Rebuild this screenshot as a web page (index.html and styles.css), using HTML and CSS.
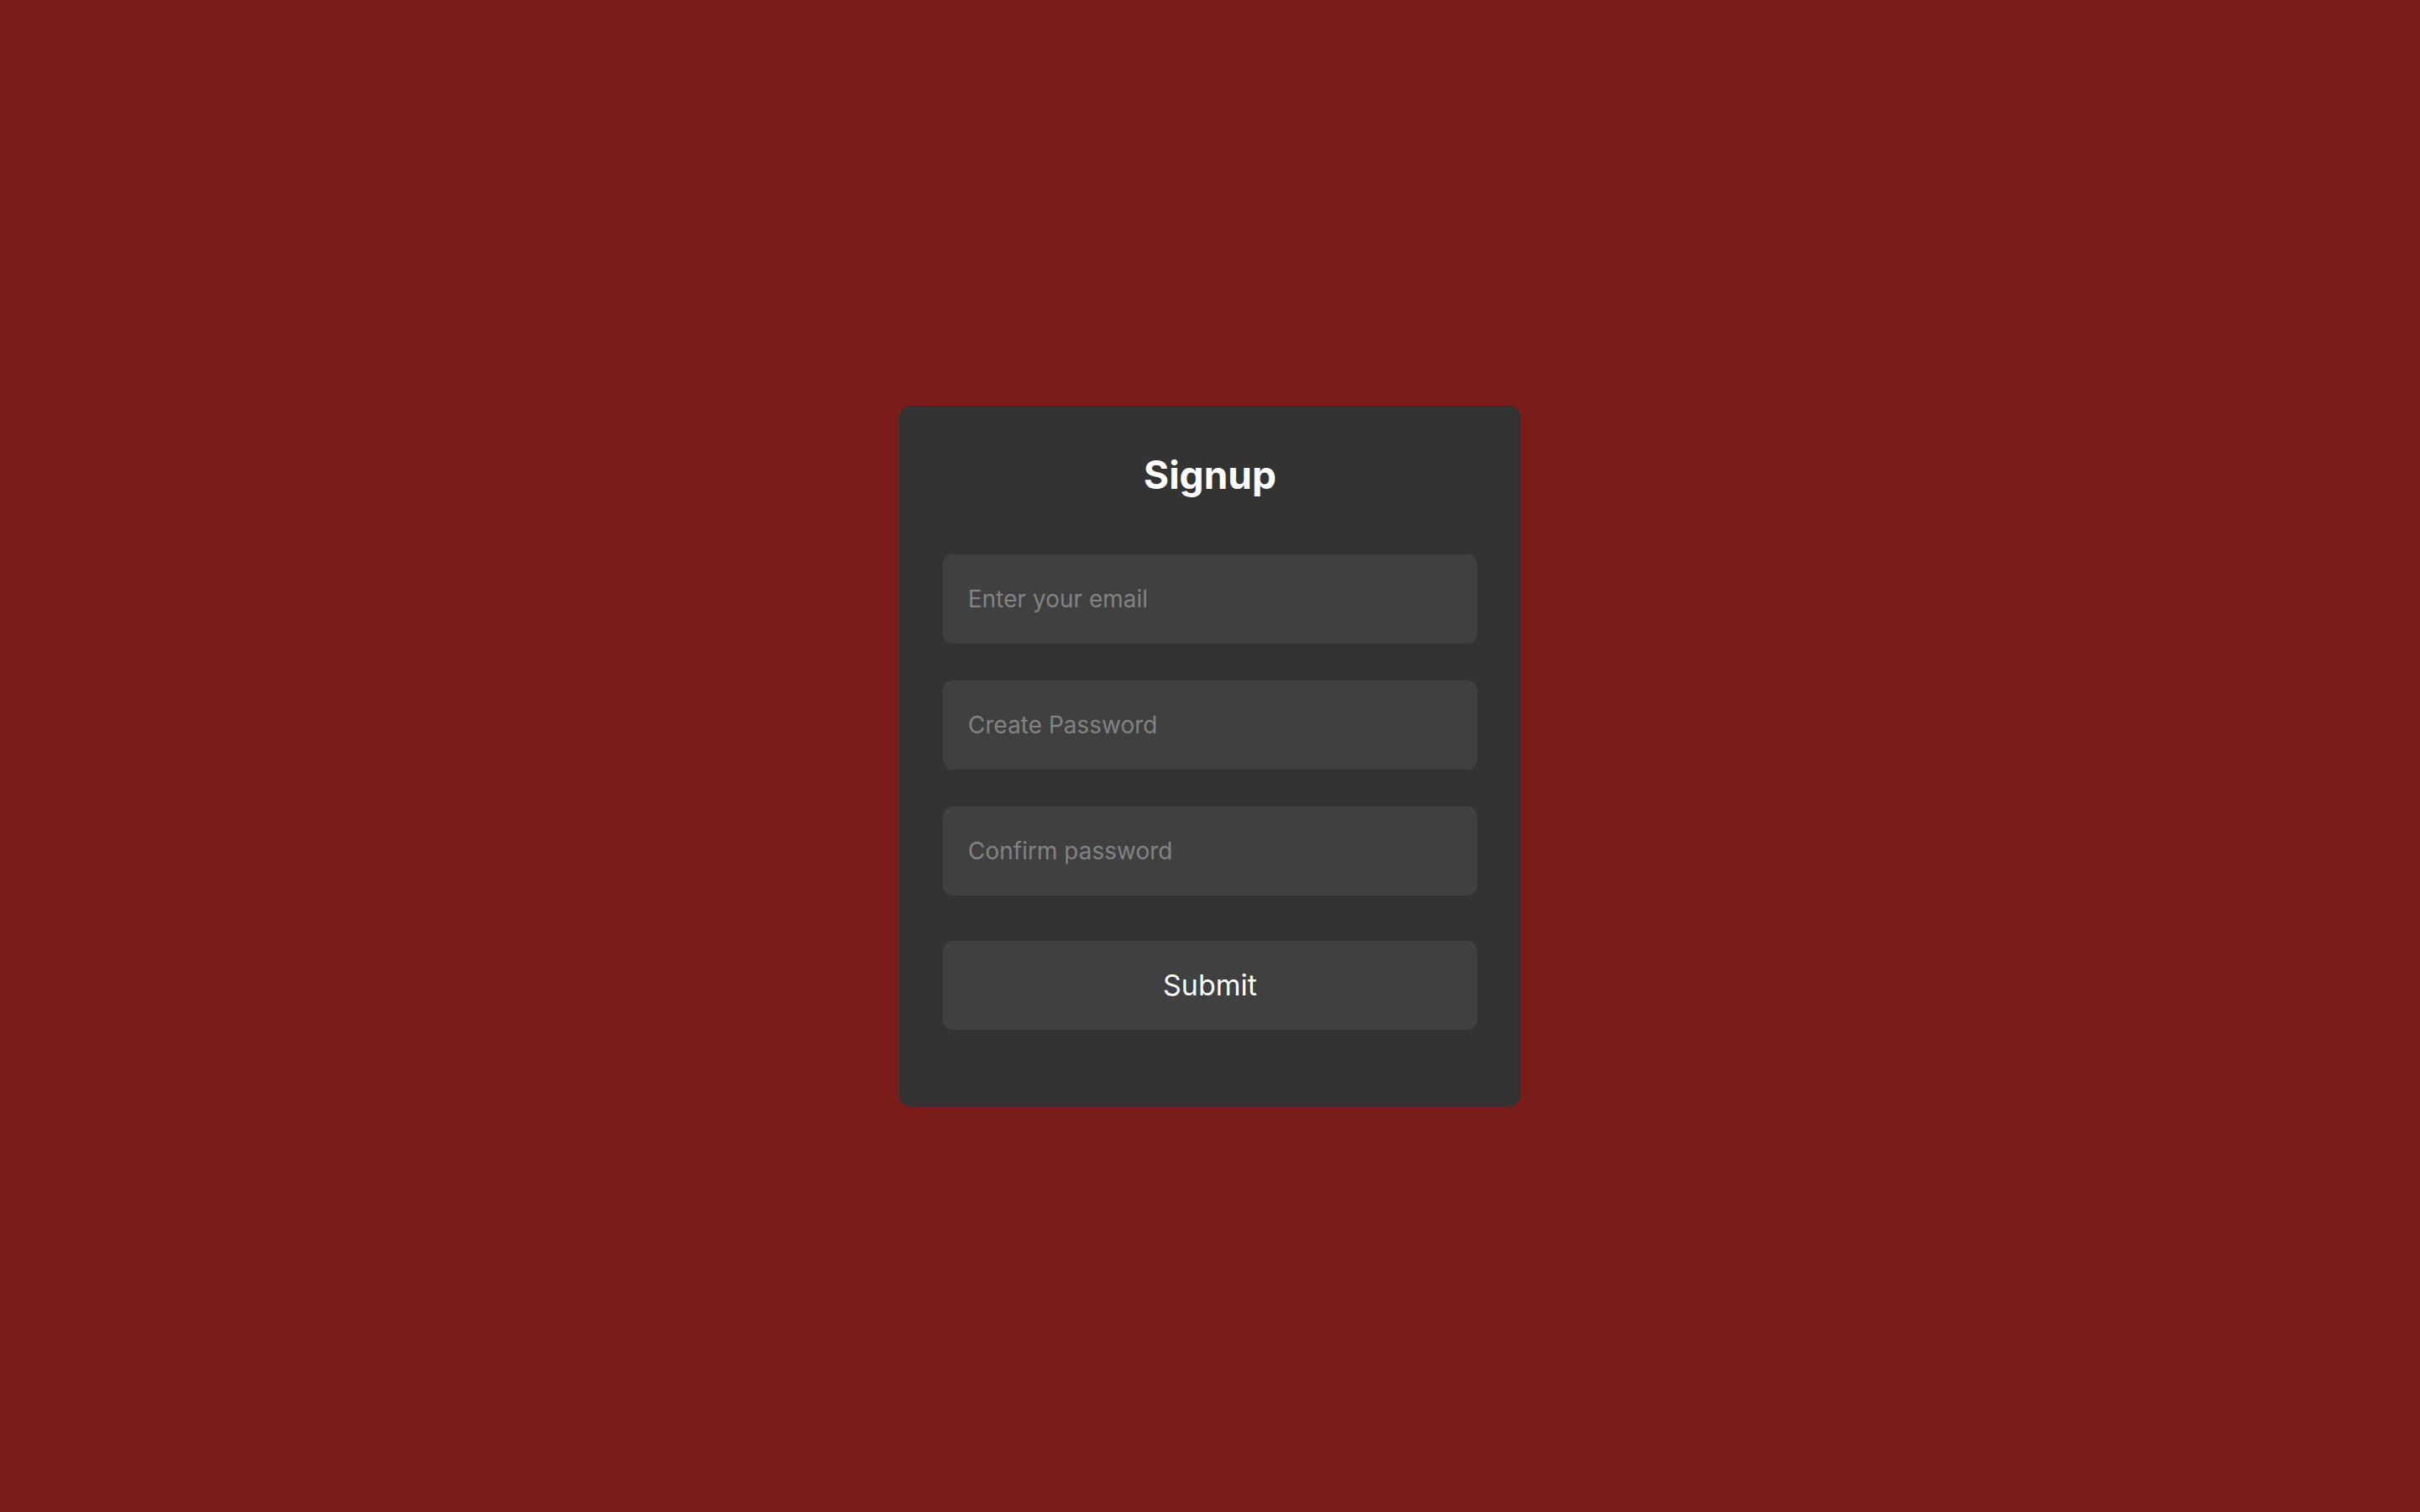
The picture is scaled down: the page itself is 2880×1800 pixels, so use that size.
FILE: index.html
```html
<!DOCTYPE html>
<html lang="en">
<head>
<meta charset="utf-8">
<title>Signup</title>
<link rel="stylesheet" href="styles.css">
</head>
<body>
<main class="page">
  <form class="card">
    <h2 class="title">Signup</h2>
    <div class="fields">
      <input class="field" type="email" placeholder="Enter your email">
      <input class="field" type="password" placeholder="Create Password">
      <input class="field" type="password" placeholder="Confirm password">
    </div>
    <button class="submit" type="button">Submit</button>
  </form>
</main>
</body>
</html>
```
FILE: styles.css
```css
* { box-sizing: border-box; }
html, body { margin: 0; padding: 0; }
body {
  background: #791c1a;
  font-family: "Inter", "Noto Sans", sans-serif;
}
.page {
  min-height: 100vh;
  display: flex;
  align-items: center;
  justify-content: center;
}
.card {
  width: 740px;
  background: #333333;
  border-radius: 15px;
  padding: 48px 52px 92px;
  display: flex;
  flex-direction: column;
}
.title {
  margin: 0 0 60px;
  height: 69px;
  line-height: 69px;
  text-align: center;
  color: #ffffff;
  font-size: 46px;
  font-weight: 700;
}
.fields {
  display: flex;
  flex-direction: column;
  gap: 44px;
}
.field {
  height: 106px;
  border: none;
  outline: none;
  border-radius: 12px;
  background: #404040;
  padding: 0 30px;
  font-family: inherit;
  font-size: 28px;
  color: #ffffff;
}
.field::placeholder { color: #838383; }
.submit {
  margin-top: 54px;
  height: 106px;
  border: none;
  border-radius: 12px;
  background: #404040;
  color: #ffffff;
  font-family: inherit;
  font-size: 34px;
  font-weight: 400;
  cursor: pointer;
}
```
